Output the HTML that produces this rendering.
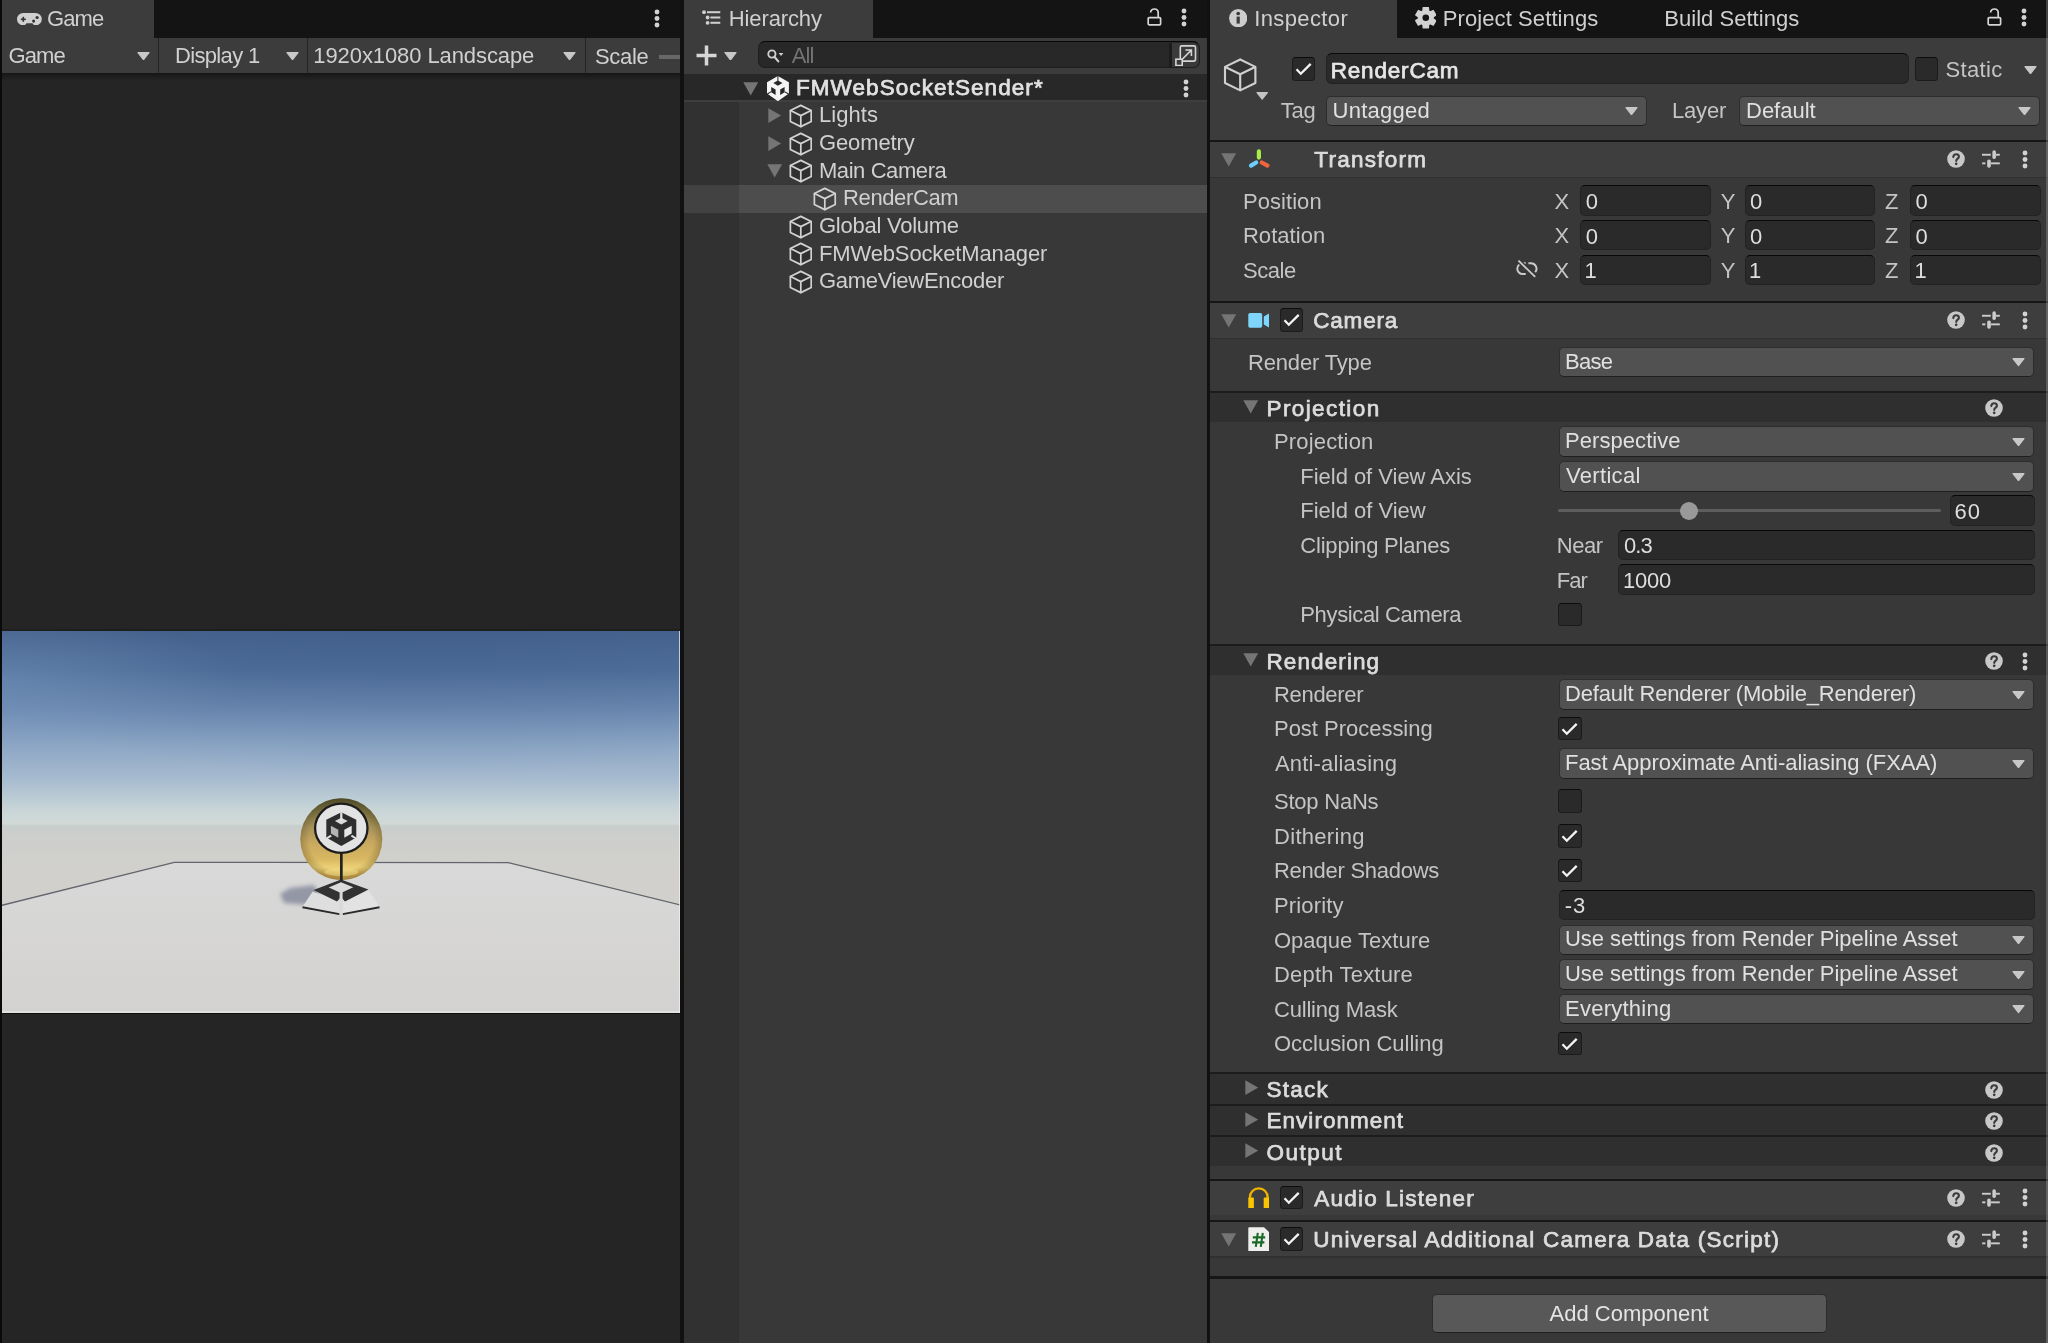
<!DOCTYPE html>
<html><head><meta charset="utf-8"><title>Unity</title>
<style>
html,body{margin:0;padding:0;background:#383838;}
body{width:2048px;height:1343px;position:relative;overflow:hidden;font-family:"Liberation Sans",sans-serif;font-size:22px;line-height:24px;}
body>div,body>svg,#t>span{position:absolute;display:block;box-sizing:border-box;}
#t{left:0;top:0;width:2048px;height:1343px;will-change:transform;background:transparent;}
#t>span{white-space:pre;}
</style></head><body>
<div style="left:0px;top:0px;width:2048px;height:1343px;background:#111;"></div>
<div style="left:2px;top:0px;width:678px;height:38px;background:#141414;"></div>
<div style="left:2px;top:0px;width:152px;height:38px;background:#3c3c3c;"></div>
<div style="left:2px;top:38px;width:678px;height:34.5px;background:#3c3c3c;"></div>
<div style="left:2px;top:72.5px;width:678px;height:1270.5px;background:#252525;"></div>
<div style="left:2px;top:72.5px;width:678px;height:8px;background:linear-gradient(#151515,#1d1d1d 40%,#252525);"></div>
<div style="left:0px;top:0px;width:2px;height:1343px;background:#0a0a0a;"></div>
<div style="left:158px;top:38px;width:1.3px;height:34.5px;background:#242424;"></div>
<div style="left:307px;top:38px;width:1.3px;height:34.5px;background:#242424;"></div>
<div style="left:585px;top:38px;width:1.3px;height:34.5px;background:#242424;"></div>
<div style="left:659.3px;top:55.2px;width:20.7px;height:3.7px;background:#686868;"></div>
<div style="left:684px;top:0px;width:523px;height:38px;background:#141414;"></div>
<div style="left:684px;top:0px;width:189px;height:38px;background:#3c3c3c;"></div>
<div style="left:684px;top:38px;width:523px;height:35.5px;background:#3c3c3c;"></div>
<div style="left:684px;top:73.5px;width:523px;height:26.8px;background:#282828;"></div>
<div style="left:684px;top:100.3px;width:523px;height:1242.7px;background:#383838;"></div>
<div style="left:684px;top:100.3px;width:55px;height:1242.7px;background:#313131;"></div>
<div style="left:684px;top:185px;width:523px;height:27.8px;background:#4d4d4d;"></div>
<div style="left:684px;top:185px;width:55px;height:27.8px;background:#424242;"></div>
<div style="left:684px;top:100.2px;width:523px;height:1.4px;background:#3e3e3e;"></div>
<div style="left:1210px;top:0px;width:838px;height:38px;background:#141414;"></div>
<div style="left:1210px;top:0px;width:187px;height:38px;background:#3c3c3c;"></div>
<div style="left:1210px;top:38px;width:838px;height:1305px;background:#383838;"></div>
<div style="left:1210px;top:38px;width:838px;height:102px;background:#3c3c3c;"></div>
<svg style="left:17px;top:12.7px;" width="24.8" height="12.5" viewBox="0 0 24.8 12.5"><path d="M6.2 0 H18.6 A6.2 6.2 0 0 1 18.6 12.4 C17 12.4 16.3 11.6 15.4 10.3 H9.5 C8.6 11.6 7.9 12.4 6.2 12.4 A6.2 6.2 0 0 1 6.2 0 Z" fill="#d0d0d0"/><g fill="#333"><rect x="3.8" y="5.5" width="5" height="1.6"/><rect x="5.5" y="3.8" width="1.6" height="5"/><circle cx="20.1" cy="4.5" r="1.6"/><circle cx="16.6" cy="8.1" r="1.55"/></g></svg>
<svg style="left:654.3px;top:8.5px;" width="6" height="19" viewBox="0 0 6 19.0"><circle cx="3" cy="3.0" r="2.45" fill="#d2d2d2"/><circle cx="3" cy="9.5" r="2.45" fill="#d2d2d2"/><circle cx="3" cy="16.0" r="2.45" fill="#d2d2d2"/></svg>
<svg style="left:137px;top:51.65px;" width="13" height="8.3" viewBox="0 0 13 8.3"><path d="M1 0.6 L12 0.6 L6.5 7.700000000000001 Z" fill="#c8c8c8" stroke="#c8c8c8" stroke-width="1.2" stroke-linejoin="round"/></svg>
<svg style="left:286.3px;top:51.65px;" width="13" height="8.3" viewBox="0 0 13 8.3"><path d="M1 0.6 L12 0.6 L6.5 7.700000000000001 Z" fill="#c8c8c8" stroke="#c8c8c8" stroke-width="1.2" stroke-linejoin="round"/></svg>
<svg style="left:563px;top:51.65px;" width="13" height="8.3" viewBox="0 0 13 8.3"><path d="M1 0.6 L12 0.6 L6.5 7.700000000000001 Z" fill="#c8c8c8" stroke="#c8c8c8" stroke-width="1.2" stroke-linejoin="round"/></svg>
<svg style="left:702px;top:10px;" width="18.5" height="15" viewBox="0 0 18.5 15"><g fill="#d0d0d0"><circle cx="2" cy="2.2" r="1.9"/><circle cx="5.6" cy="7.5" r="1.9"/><circle cx="5.6" cy="12.8" r="1.9"/><rect x="5" y="1.2" width="13.3" height="2"/><rect x="8.4" y="6.5" width="9.9" height="2"/><rect x="8.4" y="11.8" width="9.9" height="2"/></g></svg>
<svg style="left:1147.3px;top:8px;" width="15" height="18" viewBox="0 0 15 18"><g fill="none" stroke="#d6d6d6" stroke-width="1.7"><rect x="1.2" y="9.6" width="12.4" height="7.2" rx="1"/><path d="M3.6 4.6 C3.6 2.2 5.4 1 7.4 1 C9.6 1 11.2 2.4 11.2 4.8 L11.2 9.4"/></g></svg>
<svg style="left:1181.2px;top:7.9px;" width="6" height="19" viewBox="0 0 6 19.0"><circle cx="3" cy="3.0" r="2.45" fill="#d2d2d2"/><circle cx="3" cy="9.5" r="2.45" fill="#d2d2d2"/><circle cx="3" cy="16.0" r="2.45" fill="#d2d2d2"/></svg>
<svg style="left:696px;top:45.4px;" width="21" height="21" viewBox="0 0 21 21"><path d="M10.5 0.5 V20.5 M0.5 10.5 H20.5" stroke="#d6d6d6" stroke-width="3.5" fill="none"/></svg>
<svg style="left:724px;top:51.5px;" width="13" height="8.6" viewBox="0 0 13 8.6"><path d="M1 0.6 L12 0.6 L6.5 8.0 Z" fill="#c8c8c8" stroke="#c8c8c8" stroke-width="1.2" stroke-linejoin="round"/></svg>
<div style="left:758.4px;top:41.2px;width:441.6px;height:27.3px;background:#282828;border:1.5px solid #1e1e1e;border-top:1.8px solid #070707;border-radius:7px;"></div>
<div style="left:1169.4px;top:43.3px;width:2.4px;height:23.7px;background:#1c1c1c;"></div>
<div style="left:1171.8px;top:43.3px;width:26.8px;height:23.7px;background:#3a3a3a;border-radius:0 6px 6px 0;"></div>
<svg style="left:766.8px;top:48.5px;" width="17" height="14" viewBox="0 0 17 14"><circle cx="4.9" cy="5" r="3.6" fill="none" stroke="#cfcfcf" stroke-width="1.9"/><path d="M7.4 7.8 L11.3 12.4" stroke="#cfcfcf" stroke-width="2.2" stroke-linecap="round"/><path d="M11.6 4 L16.4 4 L14 7 Z" fill="#cfcfcf"/></svg>
<svg style="left:1175px;top:44.5px;" width="21.5" height="21.5" viewBox="0 0 21.5 21.5"><g fill="none" stroke="#d4d4d4" stroke-width="1.6"><rect x="5.3" y="0.9" width="15.2" height="15.2" rx="1.5"/><rect x="0.9" y="14.2" width="6.3" height="6.3" fill="#3a3a3a"/><path d="M7.5 14 L16 5.4 M10.4 5 H16.4 V11" /></g></svg>
<svg style="left:742.6px;top:81.9px;" width="15.4" height="13.8" viewBox="0 0 15.4 13.8"><path d="M0.3 0.3 L15.1 0.3 L7.7 13.5 Z" fill="#757575"/></svg>
<svg style="left:766.5px;top:75.6px;" width="22" height="25.2" viewBox="0 0 22 25.2"><path d="M10.9 0 L21.9 6.3 V17.6 L10.9 25.2 L0 17.6 V6.3 Z" fill="#f4f4f4"/><g fill="#262626"><path d="M6.3 7.1 L10.9 4.6 L15.5 7.1 L10.9 9.7Z"/><path d="M4.2 10.9 L8.6 13.4 V18.9 L4.2 16.3Z"/><path d="M17.6 10.9 L13.2 13.4 V18.9 L17.6 16.3Z"/><rect x="10.4" y="0" width="1" height="5"/><path d="M0 17.6 L4 15.2 L4.5 16.1 L0.6 18.4Z"/><path d="M21.9 17.6 L17.8 15.2 L17.3 16.1 L21.3 18.4Z"/></g></svg>
<svg style="left:1182.8px;top:79.1px;" width="6" height="19" viewBox="0 0 6 19.0"><circle cx="3" cy="3.0" r="2.45" fill="#d2d2d2"/><circle cx="3" cy="9.5" r="2.45" fill="#d2d2d2"/><circle cx="3" cy="16.0" r="2.45" fill="#d2d2d2"/></svg>
<svg style="left:768.4px;top:108.3px;" width="13.4" height="15.2" viewBox="0 0 13.4 15.2"><path d="M0.3 0.3 L13.1 7.6 L0.3 14.899999999999999 Z" fill="#757575"/></svg>
<svg style="left:788.7px;top:103.9px;" width="23.6" height="24" viewBox="0 0 24 24"><g fill="none" stroke="#d2d2d2" stroke-width="1.75" stroke-linejoin="round" stroke-linecap="round"><path d="M12 1.2 L22.6 6.4 L22.6 17.6 L12 22.8 L1.4 17.6 L1.4 6.4 Z" fill="rgba(0,0,0,0.13)"/><path d="M1.6 6.5 L12 11.6 L22.4 6.5 M12 11.6 L12 22.6"/></g></svg>
<svg style="left:768.4px;top:135.9px;" width="13.4" height="15.2" viewBox="0 0 13.4 15.2"><path d="M0.3 0.3 L13.1 7.6 L0.3 14.899999999999999 Z" fill="#757575"/></svg>
<svg style="left:788.7px;top:131.5px;" width="23.6" height="24" viewBox="0 0 24 24"><g fill="none" stroke="#d2d2d2" stroke-width="1.75" stroke-linejoin="round" stroke-linecap="round"><path d="M12 1.2 L22.6 6.4 L22.6 17.6 L12 22.8 L1.4 17.6 L1.4 6.4 Z" fill="rgba(0,0,0,0.13)"/><path d="M1.6 6.5 L12 11.6 L22.4 6.5 M12 11.6 L12 22.6"/></g></svg>
<svg style="left:767.2px;top:164.3px;" width="15.4" height="13.8" viewBox="0 0 15.4 13.8"><path d="M0.3 0.3 L15.1 0.3 L7.7 13.5 Z" fill="#757575"/></svg>
<svg style="left:788.7px;top:159.2px;" width="23.6" height="24" viewBox="0 0 24 24"><g fill="none" stroke="#d2d2d2" stroke-width="1.75" stroke-linejoin="round" stroke-linecap="round"><path d="M12 1.2 L22.6 6.4 L22.6 17.6 L12 22.8 L1.4 17.6 L1.4 6.4 Z" fill="rgba(0,0,0,0.13)"/><path d="M1.6 6.5 L12 11.6 L22.4 6.5 M12 11.6 L12 22.6"/></g></svg>
<svg style="left:788.7px;top:214.5px;" width="23.6" height="24" viewBox="0 0 24 24"><g fill="none" stroke="#d2d2d2" stroke-width="1.75" stroke-linejoin="round" stroke-linecap="round"><path d="M12 1.2 L22.6 6.4 L22.6 17.6 L12 22.8 L1.4 17.6 L1.4 6.4 Z" fill="rgba(0,0,0,0.13)"/><path d="M1.6 6.5 L12 11.6 L22.4 6.5 M12 11.6 L12 22.6"/></g></svg>
<svg style="left:788.7px;top:242.2px;" width="23.6" height="24" viewBox="0 0 24 24"><g fill="none" stroke="#d2d2d2" stroke-width="1.75" stroke-linejoin="round" stroke-linecap="round"><path d="M12 1.2 L22.6 6.4 L22.6 17.6 L12 22.8 L1.4 17.6 L1.4 6.4 Z" fill="rgba(0,0,0,0.13)"/><path d="M1.6 6.5 L12 11.6 L22.4 6.5 M12 11.6 L12 22.6"/></g></svg>
<svg style="left:788.7px;top:269.9px;" width="23.6" height="24" viewBox="0 0 24 24"><g fill="none" stroke="#d2d2d2" stroke-width="1.75" stroke-linejoin="round" stroke-linecap="round"><path d="M12 1.2 L22.6 6.4 L22.6 17.6 L12 22.8 L1.4 17.6 L1.4 6.4 Z" fill="rgba(0,0,0,0.13)"/><path d="M1.6 6.5 L12 11.6 L22.4 6.5 M12 11.6 L12 22.6"/></g></svg>
<svg style="left:813.3px;top:186.8px;" width="23.6" height="24" viewBox="0 0 24 24"><g fill="none" stroke="#d2d2d2" stroke-width="1.75" stroke-linejoin="round" stroke-linecap="round"><path d="M12 1.2 L22.6 6.4 L22.6 17.6 L12 22.8 L1.4 17.6 L1.4 6.4 Z" fill="rgba(0,0,0,0.13)"/><path d="M1.6 6.5 L12 11.6 L22.4 6.5 M12 11.6 L12 22.6"/></g></svg>
<svg style="left:1228.7px;top:8.6px;" width="18.4" height="18.4" viewBox="0 0 18.4 18.4"><circle cx="9.2" cy="9.2" r="9.1" fill="#cdcdcd"/><rect x="7.6" y="7.6" width="3.2" height="7" fill="#3c3c3c"/><circle cx="9.2" cy="4.5" r="1.85" fill="#3c3c3c"/></svg>
<svg style="left:1414.9px;top:7.4px;" width="21.6" height="21.6" viewBox="0 0 21.6 21.6"><path d="M13.72 17.60 L13.45 20.96 L8.15 20.96 L7.88 17.60 L6.37 16.73 L3.33 18.17 L0.68 13.59 L3.45 11.68 L3.45 9.92 L0.68 8.01 L3.33 3.43 L6.37 4.87 L7.88 4.00 L8.15 0.64 L13.45 0.64 L13.72 4.00 L15.23 4.87 L18.27 3.43 L20.92 8.01 L18.15 9.92 L18.15 11.68 L20.92 13.59 L18.27 18.17 L15.23 16.73Z" fill="#d2d2d2" stroke="#d2d2d2" stroke-width="1.2" stroke-linejoin="round"/><circle cx="10.8" cy="10.8" r="7.6" fill="#d2d2d2"/><circle cx="10.8" cy="10.8" r="3.3" fill="#141414"/></svg>
<svg style="left:1986.6px;top:8.4px;" width="15" height="18" viewBox="0 0 15 18"><g fill="none" stroke="#d6d6d6" stroke-width="1.7"><rect x="1.2" y="9.6" width="12.4" height="7.2" rx="1"/><path d="M3.6 4.6 C3.6 2.2 5.4 1 7.4 1 C9.6 1 11.2 2.4 11.2 4.8 L11.2 9.4"/></g></svg>
<svg style="left:2020.8px;top:7.9px;" width="6" height="19" viewBox="0 0 6 19.0"><circle cx="3" cy="3.0" r="2.45" fill="#d2d2d2"/><circle cx="3" cy="9.5" r="2.45" fill="#d2d2d2"/><circle cx="3" cy="16.0" r="2.45" fill="#d2d2d2"/></svg>
<svg style="left:1222.8px;top:57px;" width="34.4" height="35.8" viewBox="0 0 24 24"><g fill="none" stroke="#cfcfcf" stroke-width="1.5" stroke-linejoin="round" stroke-linecap="round"><path d="M12 1.2 L22.6 6.4 L22.6 17.6 L12 22.8 L1.4 17.6 L1.4 6.4 Z" fill="rgba(0,0,0,0.13)"/><path d="M1.6 6.5 L12 11.6 L22.4 6.5 M12 11.6 L12 22.6"/></g></svg>
<svg style="left:1255.6px;top:91.9px;" width="12.4" height="7.8" viewBox="0 0 12.4 7.8"><path d="M1 0.6 L11.4 0.6 L6.2 7.2 Z" fill="#c4c4c4" stroke="#c4c4c4" stroke-width="1.2" stroke-linejoin="round"/></svg>
<div style="left:1291.7px;top:57.3px;width:23.6px;height:23.6px;background:#2a2a2a;border:1.4px solid #1b1b1b;border-top-color:#0c0c0c;border-radius:3.5px;"></div>
<svg style="left:1291.7px;top:57.3px;" width="23.6" height="23.6" viewBox="0 0 23.6 23.6"><path d="M4.5 12.3 L8.8 16.7 L18.7 6.9" fill="none" stroke="#f4f4f4" stroke-width="2.3" stroke-linecap="butt" stroke-linejoin="miter"/></svg>
<div style="left:1325.6px;top:52.9px;width:583.3px;height:31.6px;background:#2a2a2a;border:1.3px solid #222;border-top:1.4px solid #080808;border-radius:6px;"></div>
<div style="left:1914.7px;top:57.3px;width:23.6px;height:23.6px;background:#2a2a2a;border:1.4px solid #1b1b1b;border-top-color:#0c0c0c;border-radius:3.5px;"></div>
<svg style="left:2024.4px;top:65.65px;" width="13" height="8.3" viewBox="0 0 13 8.3"><path d="M1 0.6 L12 0.6 L6.5 7.700000000000001 Z" fill="#c8c8c8" stroke="#c8c8c8" stroke-width="1.2" stroke-linejoin="round"/></svg>
<div style="left:1325.6px;top:95.6px;width:321.9px;height:30.6px;background:#515151;border:1.2px solid #2d2d2d;border-bottom:1.5px solid #1f1f1f;border-radius:5px;"></div>
<svg style="left:1624.8px;top:107.15px;" width="13" height="8.3" viewBox="0 0 13 8.3"><path d="M1 0.6 L12 0.6 L6.5 7.700000000000001 Z" fill="#c8c8c8" stroke="#c8c8c8" stroke-width="1.2" stroke-linejoin="round"/></svg>
<div style="left:1739.1px;top:95.6px;width:301.4px;height:30.6px;background:#515151;border:1.2px solid #2d2d2d;border-bottom:1.5px solid #1f1f1f;border-radius:5px;"></div>
<svg style="left:2017.8px;top:107.15px;" width="13" height="8.3" viewBox="0 0 13 8.3"><path d="M1 0.6 L12 0.6 L6.5 7.700000000000001 Z" fill="#c8c8c8" stroke="#c8c8c8" stroke-width="1.2" stroke-linejoin="round"/></svg>
<div style="left:1210px;top:140px;width:838px;height:2px;background:#161616;"></div>
<div style="left:1210px;top:142px;width:838px;height:34.6px;background:#3e3e3e;"></div>
<div style="left:1210px;top:176.6px;width:838px;height:1.2px;background:#303030;"></div>
<svg style="left:1220.7px;top:153.2px;" width="15.4" height="13.8" viewBox="0 0 15.4 13.8"><path d="M0.3 0.3 L15.1 0.3 L7.7 13.5 Z" fill="#757575"/></svg>
<svg style="left:1947px;top:150.3px;" width="18" height="18" viewBox="0 0 18 18"><circle cx="9" cy="9" r="8.8" fill="#c8c8c8"/><path d="M6.3 7.1 C6.3 5.3 7.5 4.3 9.1 4.3 C10.8 4.3 11.9 5.3 11.9 6.7 C11.9 8.6 9.3 8.7 9.2 10.9" fill="none" stroke="#3a3a3a" stroke-width="2.1" stroke-linecap="round"/><circle cx="9.2" cy="13.8" r="1.35" fill="#3a3a3a"/></svg>
<svg style="left:1981.9px;top:150.3px;" width="17.8" height="18" viewBox="0 0 17.8 18"><g fill="#cccccc"><rect x="0" y="3.8" width="8.8" height="1.9"/><rect x="13.8" y="3.8" width="4" height="1.9"/><rect x="10.4" y="0.3" width="3.5" height="8.6" rx="1.7"/><rect x="0.2" y="12.4" width="3.2" height="1.9"/><rect x="8.8" y="12.4" width="9" height="1.9"/><rect x="5.2" y="9.4" width="3.6" height="8.4" rx="1.7"/></g></svg>
<svg style="left:2022.4px;top:149.8px;" width="6" height="19" viewBox="0 0 6 19.0"><circle cx="3" cy="3.0" r="2.45" fill="#d2d2d2"/><circle cx="3" cy="9.5" r="2.45" fill="#d2d2d2"/><circle cx="3" cy="16.0" r="2.45" fill="#d2d2d2"/></svg>
<svg style="left:1247.6px;top:149px;" width="22.6" height="20.6" viewBox="0 0 22.6 20.6"><g stroke-linecap="round" stroke-width="4.2" fill="none"><path d="M10.9 2.4 V8.6" stroke="#a8ec48"/><path d="M8.2 13.5 L3 16.6" stroke="#6ccfff"/><path d="M13.8 13.5 L19.4 16.6" stroke="#f0653a"/></g></svg>
<div style="left:1580.2px;top:185.1px;width:130.4px;height:30.5px;background:#2a2a2a;border:1.3px solid #222;border-top:1.4px solid #080808;border-radius:5px;"></div>
<div style="left:1744.5px;top:185.1px;width:130.6px;height:30.5px;background:#2a2a2a;border:1.3px solid #222;border-top:1.4px solid #080808;border-radius:5px;"></div>
<div style="left:1910px;top:185.1px;width:130.6px;height:30.5px;background:#2a2a2a;border:1.3px solid #222;border-top:1.4px solid #080808;border-radius:5px;"></div>
<div style="left:1580.2px;top:219.8px;width:130.4px;height:30.5px;background:#2a2a2a;border:1.3px solid #222;border-top:1.4px solid #080808;border-radius:5px;"></div>
<div style="left:1744.5px;top:219.8px;width:130.6px;height:30.5px;background:#2a2a2a;border:1.3px solid #222;border-top:1.4px solid #080808;border-radius:5px;"></div>
<div style="left:1910px;top:219.8px;width:130.6px;height:30.5px;background:#2a2a2a;border:1.3px solid #222;border-top:1.4px solid #080808;border-radius:5px;"></div>
<div style="left:1580.2px;top:254.5px;width:130.4px;height:30.5px;background:#2a2a2a;border:1.3px solid #222;border-top:1.4px solid #080808;border-radius:5px;"></div>
<div style="left:1744.5px;top:254.5px;width:130.6px;height:30.5px;background:#2a2a2a;border:1.3px solid #222;border-top:1.4px solid #080808;border-radius:5px;"></div>
<div style="left:1910px;top:254.5px;width:130.6px;height:30.5px;background:#2a2a2a;border:1.3px solid #222;border-top:1.4px solid #080808;border-radius:5px;"></div>
<svg style="left:1516.1px;top:260.4px;" width="21.6" height="17.6" viewBox="0 0 21.6 17.6"><g fill="none" stroke="#cacaca" stroke-width="2" stroke-linecap="butt"><path d="M9.7 3.3 H6.7 A5.4 5.4 0 0 0 6.7 14.1 H9.7"/><path d="M12.4 3.3 H15 A5.4 5.4 0 0 1 19.2 12.2"/><path d="M7.8 8.7 H10.2" stroke-width="1.6"/></g><path d="M2.4 0.6 L19.2 16.9" stroke="#383838" stroke-width="4.6"/><path d="M2.4 0.6 L19.2 16.9" stroke="#cacaca" stroke-width="1.9"/></svg>
<div style="left:1210px;top:300.8px;width:838px;height:2px;background:#161616;"></div>
<div style="left:1210px;top:302.8px;width:838px;height:35px;background:#3e3e3e;"></div>
<div style="left:1210px;top:337.8px;width:838px;height:1.2px;background:#303030;"></div>
<svg style="left:1220.7px;top:314.2px;" width="15.4" height="13.8" viewBox="0 0 15.4 13.8"><path d="M0.3 0.3 L15.1 0.3 L7.7 13.5 Z" fill="#757575"/></svg>
<div style="left:1279.5px;top:308.2px;width:23.6px;height:23.6px;background:#2a2a2a;border:1.4px solid #1b1b1b;border-top-color:#0c0c0c;border-radius:3.5px;"></div>
<svg style="left:1279.5px;top:308.2px;" width="23.6" height="23.6" viewBox="0 0 23.6 23.6"><path d="M4.5 12.3 L8.8 16.7 L18.7 6.9" fill="none" stroke="#f4f4f4" stroke-width="2.3" stroke-linecap="butt" stroke-linejoin="miter"/></svg>
<svg style="left:1947px;top:311.3px;" width="18" height="18" viewBox="0 0 18 18"><circle cx="9" cy="9" r="8.8" fill="#c8c8c8"/><path d="M6.3 7.1 C6.3 5.3 7.5 4.3 9.1 4.3 C10.8 4.3 11.9 5.3 11.9 6.7 C11.9 8.6 9.3 8.7 9.2 10.9" fill="none" stroke="#3a3a3a" stroke-width="2.1" stroke-linecap="round"/><circle cx="9.2" cy="13.8" r="1.35" fill="#3a3a3a"/></svg>
<svg style="left:1981.9px;top:311.3px;" width="17.8" height="18" viewBox="0 0 17.8 18"><g fill="#cccccc"><rect x="0" y="3.8" width="8.8" height="1.9"/><rect x="13.8" y="3.8" width="4" height="1.9"/><rect x="10.4" y="0.3" width="3.5" height="8.6" rx="1.7"/><rect x="0.2" y="12.4" width="3.2" height="1.9"/><rect x="8.8" y="12.4" width="9" height="1.9"/><rect x="5.2" y="9.4" width="3.6" height="8.4" rx="1.7"/></g></svg>
<svg style="left:2022.4px;top:310.8px;" width="6" height="19" viewBox="0 0 6 19.0"><circle cx="3" cy="3.0" r="2.45" fill="#d2d2d2"/><circle cx="3" cy="9.5" r="2.45" fill="#d2d2d2"/><circle cx="3" cy="16.0" r="2.45" fill="#d2d2d2"/></svg>
<svg style="left:1247.8px;top:312.5px;" width="21.6" height="15" viewBox="0 0 21.6 15"><rect x="0.3" y="0.1" width="13.9" height="14.7" rx="1.7" fill="#7fd6fd"/><path d="M15.8 3.4 L21.2 0.3 V14.7 L15.8 11.6 Z" fill="#7fd6fd"/></svg>
<div style="left:1558.8px;top:346.8px;width:475.7px;height:30.4px;background:#515151;border:1.2px solid #2d2d2d;border-bottom:1.5px solid #1f1f1f;border-radius:5px;"></div>
<svg style="left:2011.8px;top:358.25px;" width="13" height="8.3" viewBox="0 0 13 8.3"><path d="M1 0.6 L12 0.6 L6.5 7.700000000000001 Z" fill="#c8c8c8" stroke="#c8c8c8" stroke-width="1.2" stroke-linejoin="round"/></svg>
<div style="left:1210px;top:391px;width:838px;height:2px;background:#1c1c1c;"></div>
<div style="left:1210px;top:393px;width:838px;height:29.2px;background:#2f2f2f;"></div>
<svg style="left:1242.9px;top:399.9px;" width="15.4" height="13.8" viewBox="0 0 15.4 13.8"><path d="M0.3 0.3 L15.1 0.3 L7.7 13.5 Z" fill="#757575"/></svg>
<svg style="left:1985.4px;top:399.4px;" width="18" height="18" viewBox="0 0 18 18"><circle cx="9" cy="9" r="8.8" fill="#c8c8c8"/><path d="M6.3 7.1 C6.3 5.3 7.5 4.3 9.1 4.3 C10.8 4.3 11.9 5.3 11.9 6.7 C11.9 8.6 9.3 8.7 9.2 10.9" fill="none" stroke="#3a3a3a" stroke-width="2.1" stroke-linecap="round"/><circle cx="9.2" cy="13.8" r="1.35" fill="#3a3a3a"/></svg>
<div style="left:1558.8px;top:426.3px;width:475.7px;height:30.4px;background:#515151;border:1.2px solid #2d2d2d;border-bottom:1.5px solid #1f1f1f;border-radius:5px;"></div>
<svg style="left:2011.8px;top:437.75px;" width="13" height="8.3" viewBox="0 0 13 8.3"><path d="M1 0.6 L12 0.6 L6.5 7.700000000000001 Z" fill="#c8c8c8" stroke="#c8c8c8" stroke-width="1.2" stroke-linejoin="round"/></svg>
<div style="left:1558.8px;top:461px;width:475.7px;height:30.5px;background:#515151;border:1.2px solid #2d2d2d;border-bottom:1.5px solid #1f1f1f;border-radius:5px;"></div>
<svg style="left:2011.8px;top:472.5px;" width="13" height="8.3" viewBox="0 0 13 8.3"><path d="M1 0.6 L12 0.6 L6.5 7.700000000000001 Z" fill="#c8c8c8" stroke="#c8c8c8" stroke-width="1.2" stroke-linejoin="round"/></svg>
<div style="left:1558px;top:509.2px;width:383px;height:3px;background:#5e5e5e;border-radius:1.5px;"></div>
<div style="left:1679.8px;top:501.7px;width:18px;height:18px;background:#999;border-radius:50%;"></div>
<div style="left:1949.7px;top:495px;width:85.6px;height:30.9px;background:#2a2a2a;border:1.3px solid #222;border-top:1.4px solid #080808;border-radius:5px;"></div>
<div style="left:1618.2px;top:529.6px;width:417.1px;height:30.8px;background:#2a2a2a;border:1.3px solid #222;border-top:1.4px solid #080808;border-radius:5px;"></div>
<div style="left:1618.2px;top:564.2px;width:417.1px;height:30.8px;background:#2a2a2a;border:1.3px solid #222;border-top:1.4px solid #080808;border-radius:5px;"></div>
<div style="left:1558.3px;top:602.5px;width:23.6px;height:23.6px;background:#2a2a2a;border:1.4px solid #1b1b1b;border-top-color:#0c0c0c;border-radius:3.5px;"></div>
<div style="left:1210px;top:643.6px;width:838px;height:2px;background:#1c1c1c;"></div>
<div style="left:1210px;top:645.6px;width:838px;height:29.2px;background:#2f2f2f;"></div>
<svg style="left:1242.9px;top:652.5px;" width="15.4" height="13.8" viewBox="0 0 15.4 13.8"><path d="M0.3 0.3 L15.1 0.3 L7.7 13.5 Z" fill="#757575"/></svg>
<svg style="left:1985.4px;top:652px;" width="18" height="18" viewBox="0 0 18 18"><circle cx="9" cy="9" r="8.8" fill="#c8c8c8"/><path d="M6.3 7.1 C6.3 5.3 7.5 4.3 9.1 4.3 C10.8 4.3 11.9 5.3 11.9 6.7 C11.9 8.6 9.3 8.7 9.2 10.9" fill="none" stroke="#3a3a3a" stroke-width="2.1" stroke-linecap="round"/><circle cx="9.2" cy="13.8" r="1.35" fill="#3a3a3a"/></svg>
<svg style="left:2022.4px;top:651.5px;" width="6" height="19" viewBox="0 0 6 19.0"><circle cx="3" cy="3.0" r="2.45" fill="#d2d2d2"/><circle cx="3" cy="9.5" r="2.45" fill="#d2d2d2"/><circle cx="3" cy="16.0" r="2.45" fill="#d2d2d2"/></svg>
<div style="left:1558.8px;top:679.3px;width:475.7px;height:30.4px;background:#515151;border:1.2px solid #2d2d2d;border-bottom:1.5px solid #1f1f1f;border-radius:5px;"></div>
<svg style="left:2011.8px;top:690.75px;" width="13" height="8.3" viewBox="0 0 13 8.3"><path d="M1 0.6 L12 0.6 L6.5 7.700000000000001 Z" fill="#c8c8c8" stroke="#c8c8c8" stroke-width="1.2" stroke-linejoin="round"/></svg>
<div style="left:1558.3px;top:716.8px;width:23.6px;height:23.6px;background:#2a2a2a;border:1.4px solid #1b1b1b;border-top-color:#0c0c0c;border-radius:3.5px;"></div>
<svg style="left:1558.3px;top:716.8px;" width="23.6" height="23.6" viewBox="0 0 23.6 23.6"><path d="M4.5 12.3 L8.8 16.7 L18.7 6.9" fill="none" stroke="#f4f4f4" stroke-width="2.3" stroke-linecap="butt" stroke-linejoin="miter"/></svg>
<div style="left:1558.8px;top:748px;width:475.7px;height:30.5px;background:#515151;border:1.2px solid #2d2d2d;border-bottom:1.5px solid #1f1f1f;border-radius:5px;"></div>
<svg style="left:2011.8px;top:759.5px;" width="13" height="8.3" viewBox="0 0 13 8.3"><path d="M1 0.6 L12 0.6 L6.5 7.700000000000001 Z" fill="#c8c8c8" stroke="#c8c8c8" stroke-width="1.2" stroke-linejoin="round"/></svg>
<div style="left:1558.3px;top:789.2px;width:23.6px;height:23.6px;background:#2a2a2a;border:1.4px solid #1b1b1b;border-top-color:#0c0c0c;border-radius:3.5px;"></div>
<div style="left:1558.3px;top:824.2px;width:23.6px;height:23.6px;background:#2a2a2a;border:1.4px solid #1b1b1b;border-top-color:#0c0c0c;border-radius:3.5px;"></div>
<svg style="left:1558.3px;top:824.2px;" width="23.6" height="23.6" viewBox="0 0 23.6 23.6"><path d="M4.5 12.3 L8.8 16.7 L18.7 6.9" fill="none" stroke="#f4f4f4" stroke-width="2.3" stroke-linecap="butt" stroke-linejoin="miter"/></svg>
<div style="left:1558.3px;top:858.7px;width:23.6px;height:23.6px;background:#2a2a2a;border:1.4px solid #1b1b1b;border-top-color:#0c0c0c;border-radius:3.5px;"></div>
<svg style="left:1558.3px;top:858.7px;" width="23.6" height="23.6" viewBox="0 0 23.6 23.6"><path d="M4.5 12.3 L8.8 16.7 L18.7 6.9" fill="none" stroke="#f4f4f4" stroke-width="2.3" stroke-linecap="butt" stroke-linejoin="miter"/></svg>
<div style="left:1558.8px;top:889.6px;width:476.5px;height:30.8px;background:#2a2a2a;border:1.3px solid #222;border-top:1.4px solid #080808;border-radius:5px;"></div>
<div style="left:1558.8px;top:924.7px;width:475.7px;height:30.5px;background:#515151;border:1.2px solid #2d2d2d;border-bottom:1.5px solid #1f1f1f;border-radius:5px;"></div>
<svg style="left:2011.8px;top:936.2px;" width="13" height="8.3" viewBox="0 0 13 8.3"><path d="M1 0.6 L12 0.6 L6.5 7.700000000000001 Z" fill="#c8c8c8" stroke="#c8c8c8" stroke-width="1.2" stroke-linejoin="round"/></svg>
<div style="left:1558.8px;top:959.1px;width:475.7px;height:30.7px;background:#515151;border:1.2px solid #2d2d2d;border-bottom:1.5px solid #1f1f1f;border-radius:5px;"></div>
<svg style="left:2011.8px;top:970.7px;" width="13" height="8.3" viewBox="0 0 13 8.3"><path d="M1 0.6 L12 0.6 L6.5 7.700000000000001 Z" fill="#c8c8c8" stroke="#c8c8c8" stroke-width="1.2" stroke-linejoin="round"/></svg>
<div style="left:1558.8px;top:993.8px;width:475.7px;height:30.5px;background:#515151;border:1.2px solid #2d2d2d;border-bottom:1.5px solid #1f1f1f;border-radius:5px;"></div>
<svg style="left:2011.8px;top:1005.3px;" width="13" height="8.3" viewBox="0 0 13 8.3"><path d="M1 0.6 L12 0.6 L6.5 7.700000000000001 Z" fill="#c8c8c8" stroke="#c8c8c8" stroke-width="1.2" stroke-linejoin="round"/></svg>
<div style="left:1558.3px;top:1031.9px;width:23.6px;height:23.6px;background:#2a2a2a;border:1.4px solid #1b1b1b;border-top-color:#0c0c0c;border-radius:3.5px;"></div>
<svg style="left:1558.3px;top:1031.9px;" width="23.6" height="23.6" viewBox="0 0 23.6 23.6"><path d="M4.5 12.3 L8.8 16.7 L18.7 6.9" fill="none" stroke="#f4f4f4" stroke-width="2.3" stroke-linecap="butt" stroke-linejoin="miter"/></svg>
<div style="left:1210px;top:1072px;width:838px;height:2px;background:#1c1c1c;"></div>
<div style="left:1210px;top:1074px;width:838px;height:30px;background:#2f2f2f;"></div>
<svg style="left:1244.5px;top:1080.4px;" width="13.4" height="15.2" viewBox="0 0 13.4 15.2"><path d="M0.3 0.3 L13.1 7.6 L0.3 14.899999999999999 Z" fill="#757575"/></svg>
<svg style="left:1985.4px;top:1080.8px;" width="18" height="18" viewBox="0 0 18 18"><circle cx="9" cy="9" r="8.8" fill="#c8c8c8"/><path d="M6.3 7.1 C6.3 5.3 7.5 4.3 9.1 4.3 C10.8 4.3 11.9 5.3 11.9 6.7 C11.9 8.6 9.3 8.7 9.2 10.9" fill="none" stroke="#3a3a3a" stroke-width="2.1" stroke-linecap="round"/><circle cx="9.2" cy="13.8" r="1.35" fill="#3a3a3a"/></svg>
<div style="left:1210px;top:1104px;width:838px;height:2px;background:#1c1c1c;"></div>
<div style="left:1210px;top:1106px;width:838px;height:29.3px;background:#2f2f2f;"></div>
<svg style="left:1244.5px;top:1112.05px;" width="13.4" height="15.2" viewBox="0 0 13.4 15.2"><path d="M0.3 0.3 L13.1 7.6 L0.3 14.899999999999999 Z" fill="#757575"/></svg>
<svg style="left:1985.4px;top:1112.45px;" width="18" height="18" viewBox="0 0 18 18"><circle cx="9" cy="9" r="8.8" fill="#c8c8c8"/><path d="M6.3 7.1 C6.3 5.3 7.5 4.3 9.1 4.3 C10.8 4.3 11.9 5.3 11.9 6.7 C11.9 8.6 9.3 8.7 9.2 10.9" fill="none" stroke="#3a3a3a" stroke-width="2.1" stroke-linecap="round"/><circle cx="9.2" cy="13.8" r="1.35" fill="#3a3a3a"/></svg>
<div style="left:1210px;top:1135.3px;width:838px;height:2px;background:#1c1c1c;"></div>
<div style="left:1210px;top:1137.3px;width:838px;height:29.1px;background:#2f2f2f;"></div>
<svg style="left:1244.5px;top:1143.25px;" width="13.4" height="15.2" viewBox="0 0 13.4 15.2"><path d="M0.3 0.3 L13.1 7.6 L0.3 14.899999999999999 Z" fill="#757575"/></svg>
<svg style="left:1985.4px;top:1143.65px;" width="18" height="18" viewBox="0 0 18 18"><circle cx="9" cy="9" r="8.8" fill="#c8c8c8"/><path d="M6.3 7.1 C6.3 5.3 7.5 4.3 9.1 4.3 C10.8 4.3 11.9 5.3 11.9 6.7 C11.9 8.6 9.3 8.7 9.2 10.9" fill="none" stroke="#3a3a3a" stroke-width="2.1" stroke-linecap="round"/><circle cx="9.2" cy="13.8" r="1.35" fill="#3a3a3a"/></svg>
<div style="left:1210px;top:1178.8px;width:838px;height:2px;background:#161616;"></div>
<div style="left:1210px;top:1180.8px;width:838px;height:33.8px;background:#3e3e3e;"></div>
<div style="left:1210px;top:1214.6px;width:838px;height:1.2px;background:#303030;"></div>
<div style="left:1279.5px;top:1185.6px;width:23.6px;height:23.6px;background:#2a2a2a;border:1.4px solid #1b1b1b;border-top-color:#0c0c0c;border-radius:3.5px;"></div>
<svg style="left:1279.5px;top:1185.6px;" width="23.6" height="23.6" viewBox="0 0 23.6 23.6"><path d="M4.5 12.3 L8.8 16.7 L18.7 6.9" fill="none" stroke="#f4f4f4" stroke-width="2.3" stroke-linecap="butt" stroke-linejoin="miter"/></svg>
<svg style="left:1947px;top:1188.7px;" width="18" height="18" viewBox="0 0 18 18"><circle cx="9" cy="9" r="8.8" fill="#c8c8c8"/><path d="M6.3 7.1 C6.3 5.3 7.5 4.3 9.1 4.3 C10.8 4.3 11.9 5.3 11.9 6.7 C11.9 8.6 9.3 8.7 9.2 10.9" fill="none" stroke="#3a3a3a" stroke-width="2.1" stroke-linecap="round"/><circle cx="9.2" cy="13.8" r="1.35" fill="#3a3a3a"/></svg>
<svg style="left:1981.9px;top:1188.7px;" width="17.8" height="18" viewBox="0 0 17.8 18"><g fill="#cccccc"><rect x="0" y="3.8" width="8.8" height="1.9"/><rect x="13.8" y="3.8" width="4" height="1.9"/><rect x="10.4" y="0.3" width="3.5" height="8.6" rx="1.7"/><rect x="0.2" y="12.4" width="3.2" height="1.9"/><rect x="8.8" y="12.4" width="9" height="1.9"/><rect x="5.2" y="9.4" width="3.6" height="8.4" rx="1.7"/></g></svg>
<svg style="left:2022.4px;top:1188.2px;" width="6" height="19" viewBox="0 0 6 19.0"><circle cx="3" cy="3.0" r="2.45" fill="#d2d2d2"/><circle cx="3" cy="9.5" r="2.45" fill="#d2d2d2"/><circle cx="3" cy="16.0" r="2.45" fill="#d2d2d2"/></svg>
<svg style="left:1247.8px;top:1186.6px;" width="21.6" height="21.6" viewBox="0 0 21.6 21.6"><path d="M1.9 12 V10.4 C1.9 5.2 5.8 1.4 10.8 1.4 C15.8 1.4 19.7 5.2 19.7 10.4 V12" fill="none" stroke="#f2b200" stroke-width="2.3"/><rect x="0.3" y="10.6" width="5.6" height="10.8" rx="0.8" fill="#f9c400"/><rect x="15.7" y="10.6" width="5.6" height="10.8" rx="0.8" fill="#f9c400"/></svg>
<div style="left:1210px;top:1214.6px;width:838px;height:5.2px;background:#383838;"></div>
<div style="left:1210px;top:1220.2px;width:838px;height:2px;background:#161616;"></div>
<div style="left:1210px;top:1222.2px;width:838px;height:34.2px;background:#3e3e3e;"></div>
<div style="left:1210px;top:1256.4px;width:838px;height:1.2px;background:#303030;"></div>
<svg style="left:1220.7px;top:1233.2px;" width="15.4" height="13.8" viewBox="0 0 15.4 13.8"><path d="M0.3 0.3 L15.1 0.3 L7.7 13.5 Z" fill="#757575"/></svg>
<div style="left:1279.5px;top:1227.2px;width:23.6px;height:23.6px;background:#2a2a2a;border:1.4px solid #1b1b1b;border-top-color:#0c0c0c;border-radius:3.5px;"></div>
<svg style="left:1279.5px;top:1227.2px;" width="23.6" height="23.6" viewBox="0 0 23.6 23.6"><path d="M4.5 12.3 L8.8 16.7 L18.7 6.9" fill="none" stroke="#f4f4f4" stroke-width="2.3" stroke-linecap="butt" stroke-linejoin="miter"/></svg>
<svg style="left:1947px;top:1230.3px;" width="18" height="18" viewBox="0 0 18 18"><circle cx="9" cy="9" r="8.8" fill="#c8c8c8"/><path d="M6.3 7.1 C6.3 5.3 7.5 4.3 9.1 4.3 C10.8 4.3 11.9 5.3 11.9 6.7 C11.9 8.6 9.3 8.7 9.2 10.9" fill="none" stroke="#3a3a3a" stroke-width="2.1" stroke-linecap="round"/><circle cx="9.2" cy="13.8" r="1.35" fill="#3a3a3a"/></svg>
<svg style="left:1981.9px;top:1230.3px;" width="17.8" height="18" viewBox="0 0 17.8 18"><g fill="#cccccc"><rect x="0" y="3.8" width="8.8" height="1.9"/><rect x="13.8" y="3.8" width="4" height="1.9"/><rect x="10.4" y="0.3" width="3.5" height="8.6" rx="1.7"/><rect x="0.2" y="12.4" width="3.2" height="1.9"/><rect x="8.8" y="12.4" width="9" height="1.9"/><rect x="5.2" y="9.4" width="3.6" height="8.4" rx="1.7"/></g></svg>
<svg style="left:2022.4px;top:1229.8px;" width="6" height="19" viewBox="0 0 6 19.0"><circle cx="3" cy="3.0" r="2.45" fill="#d2d2d2"/><circle cx="3" cy="9.5" r="2.45" fill="#d2d2d2"/><circle cx="3" cy="16.0" r="2.45" fill="#d2d2d2"/></svg>
<svg style="left:1247.7px;top:1226.6px;" width="21.6" height="24.8" viewBox="0 0 21.6 24.8"><path d="M1.6 0.3 H16 L21.3 5.4 V23.2 C21.3 24 20.8 24.5 20 24.5 H1.6 C0.8 24.5 0.3 24 0.3 23.2 V1.6 C0.3 0.8 0.8 0.3 1.6 0.3Z" fill="#efefee"/><g stroke="#1c6a27" stroke-width="2.1" fill="none"><path d="M9.8 5.8 L7.8 19.8 M14.8 5.8 L12.8 19.8 M4.8 10.4 H17.2 M4 15.4 H16.4"/></g></svg>
<div style="left:1210px;top:1276.2px;width:838px;height:2.4px;background:#161616;"></div>
<div style="left:1431.5px;top:1294.2px;width:395px;height:39px;background:#585858;border:1.3px solid #2c2c2c;border-bottom-color:#202020;border-radius:5px;"></div>
<svg style="left:2px;top:631px;" width="678.4" height="381.7" viewBox="0 0 678.4 381.7">
<defs>
<linearGradient id="sky" x1="0" y1="0" x2="0" y2="1">
<stop offset="0" stop-color="#47648f"/><stop offset="0.2" stop-color="#50709b"/><stop offset="0.39" stop-color="#6a88b0"/><stop offset="0.58" stop-color="#8ba5c4"/><stop offset="0.77" stop-color="#a9bdd0"/><stop offset="0.905" stop-color="#c6d4d7"/><stop offset="0.985" stop-color="#d2dad8"/><stop offset="1" stop-color="#c4ccca"/></linearGradient>
<linearGradient id="far" x1="0" y1="0" x2="0" y2="1"><stop offset="0" stop-color="#c8cecc"/><stop offset="0.3" stop-color="#cdcfcc"/><stop offset="1" stop-color="#d1d0cd"/></linearGradient>
<linearGradient id="pl" x1="0" y1="0" x2="0" y2="1"><stop offset="0" stop-color="#d9d9d9"/><stop offset="1" stop-color="#d3d2d0"/></linearGradient>
<radialGradient id="vig" cx="0.6" cy="0" r="0.75"><stop offset="0" stop-color="#2d4a7a" stop-opacity="0.22"/><stop offset="1" stop-color="#2d4a7a" stop-opacity="0"/></radialGradient>
<radialGradient id="lft" cx="0" cy="0.25" r="0.35"><stop offset="0" stop-color="#86a6cc" stop-opacity="0.3"/><stop offset="1" stop-color="#86a6cc" stop-opacity="0"/></radialGradient>
<linearGradient id="sp" x1="0" y1="0" x2="0" y2="1">
<stop offset="0" stop-color="#504c2b"/><stop offset="0.16" stop-color="#7a7140"/><stop offset="0.36" stop-color="#a8935a"/><stop offset="0.55" stop-color="#c9a95e"/><stop offset="0.74" stop-color="#d8b862"/><stop offset="0.85" stop-color="#ecd176"/><stop offset="0.93" stop-color="#d2ab52"/><stop offset="1" stop-color="#bf9a48"/></linearGradient>
<radialGradient id="spe" cx="0.5" cy="0.5" r="0.5"><stop offset="0.78" stop-color="#4a4020" stop-opacity="0"/><stop offset="1" stop-color="#4a4020" stop-opacity="0.3"/></radialGradient>
<filter id="bl" x="-30%" y="-30%" width="160%" height="160%"><feGaussianBlur stdDeviation="2.2"/></filter>
<filter id="b1" x="-10%" y="-10%" width="120%" height="120%"><feGaussianBlur stdDeviation="0.6"/></filter>
</defs>
<rect x="0" y="0" width="678.4" height="195.5" fill="url(#sky)"/>
<rect x="0" y="0" width="678.4" height="195.5" fill="url(#vig)"/>
<rect x="0" y="0" width="678.4" height="195.5" fill="url(#lft)"/>
<rect x="0" y="195" width="678.4" height="40" fill="url(#far)"/>
<rect x="0" y="234" width="678.4" height="147.7" fill="#d1d0cd"/>
<polygon points="0.0,274.3 172.3,231.4 506.3,231.6 678.4,273.9 678.4,381.7 0.0,381.7" fill="url(#pl)"/>
<polyline points="0.0,274.3 172.3,231.4 506.3,231.6 678.4,273.9" fill="none" stroke="#62656b" stroke-width="1.3"/>
<g filter="url(#bl)"><polygon points="278.0,263.0 288.0,257.0 312.0,254.0 318.0,265.0 308.0,274.0 282.0,272.0" fill="#9497a6"/></g>
<g filter="url(#b1)">
<polygon points="310.5,260.7 300.5,275.7 337.6,282.6 337.6,269.6" fill="#dedede"/>
<polygon points="366.8,259.5 377.5,275.7 340.6,282.6 340.6,269.6" fill="#e2e2e2"/>
<polyline points="300.5,276.3 337.4,283.2" stroke="#2a2a2a" stroke-width="1.9" fill="none"/>
<polyline points="340.8,283.2 377.5,276.3" stroke="#2a2a2a" stroke-width="1.9" fill="none"/>
<polygon points="311.6,259.0 339.0,248.6 366.4,258.6 343.0,270.4 339.0,266.0 335.0,270.4" fill="#303030"/>
<polygon points="326.7,256.6 339.0,251.2 351.3,256.2 339.0,262.0" fill="#dcdcdc"/>
<rect x="337.6" y="259" width="3" height="23.6" fill="#dadada"/>
<circle cx="339.3" cy="208.20000000000005" r="41" fill="url(#sp)"/>
<circle cx="339.3" cy="208.20000000000005" r="41" fill="url(#spe)"/>
<ellipse cx="339.3" cy="241" rx="17" ry="4" fill="#f2dc86" opacity="0.55"/>
<rect x="338" y="221" width="2.7" height="29" fill="#242424"/>
<ellipse cx="339.3" cy="197.20000000000005" rx="26.2" ry="24.6" fill="#e3e3e3" stroke="#1d1d1d" stroke-width="2.3"/>
<g transform="translate(339.3,198.20000000000005)">
<polygon points="0,-17 15,-9.4 15,8.2 0,16.8 -15,8.2 -15,-9.4" fill="#2f2f2f"/>
<polygon points="0,-11.5 6.4,-8.2 0,-4.6 -6.4,-8.2" fill="#dadada"/>
<polygon points="-10.4,-3.4 -3,0.6 -3,8.6 -10.4,4.4" fill="#b4b4b4"/>
<polygon points="10.4,-3.4 3,0.6 3,8.6 10.4,4.4" fill="#e6e6e6"/>
<rect x="-1.1" y="-17" width="2.2" height="9" fill="#e3e3e3"/>
<polygon points="-15,8.2 -10.6,5.6 -9.6,7.2 -14,9.8" fill="#e3e3e3"/>
<polygon points="15,8.2 10.6,5.6 9.6,7.2 14,9.8" fill="#e3e3e3"/>
</g>
</g>
<rect x="677.1999999999999" y="0" width="1.2" height="381.7" fill="#f2f2f2" opacity="0.9"/>
<rect x="0" y="380.5" width="678.4" height="1.2" fill="#f2f2f2" opacity="0.9"/>
</svg>
<div style="left:2px;top:629.4px;width:678.4px;height:1.6px;background:#1e1e1e;"></div>
<div style="left:2px;top:1012.7px;width:678.4px;height:1.3px;background:#111;"></div>
<div style="left:2045.8px;top:0px;width:2.2px;height:1343px;background:rgba(255,255,255,0.2);"></div>
<div id="t">
<span style="left:47.0px;top:7.0px;letter-spacing:-0.90px;color:#d0d0d0;">Game</span>
<span style="left:8.5px;top:44.0px;letter-spacing:-0.90px;color:#d0d0d0;">Game</span>
<span style="left:174.9px;top:44.0px;letter-spacing:-0.64px;color:#d0d0d0;">Display 1</span>
<span style="left:313.3px;top:44.0px;letter-spacing:-0.09px;color:#d0d0d0;">1920x1080 Landscape</span>
<span style="left:595.0px;top:45.0px;letter-spacing:-0.32px;color:#d0d0d0;">Scale</span>
<span style="left:728.8px;top:7.0px;letter-spacing:-0.12px;color:#d0d0d0;">Hierarchy</span>
<span style="left:791.8px;top:44.0px;letter-spacing:-0.90px;color:#737373;">All</span>
<span style="left:795.9px;top:76.0px;letter-spacing:1.08px;color:#e2e2e2;-webkit-text-stroke:0.75px #e2e2e2;font-size:22.5px;">FMWebSocketSender*</span>
<span style="left:818.9px;top:103.0px;letter-spacing:0.06px;color:#d0d0d0;">Lights</span>
<span style="left:818.9px;top:131.0px;letter-spacing:-0.10px;color:#d0d0d0;">Geometry</span>
<span style="left:818.9px;top:159.0px;letter-spacing:-0.41px;color:#d0d0d0;">Main Camera</span>
<span style="left:818.9px;top:214.0px;letter-spacing:-0.24px;color:#d0d0d0;">Global Volume</span>
<span style="left:818.9px;top:242.0px;letter-spacing:-0.13px;color:#d0d0d0;">FMWebSocketManager</span>
<span style="left:818.9px;top:269.0px;letter-spacing:-0.27px;color:#d0d0d0;">GameViewEncoder</span>
<span style="left:843.0px;top:186.0px;letter-spacing:-0.37px;color:#d0d0d0;">RenderCam</span>
<span style="left:1254.2px;top:7.0px;letter-spacing:0.39px;color:#d0d0d0;">Inspector</span>
<span style="left:1442.8px;top:7.0px;letter-spacing:0.09px;color:#d0d0d0;">Project Settings</span>
<span style="left:1664.3px;top:7.0px;letter-spacing:0.03px;color:#d0d0d0;">Build Settings</span>
<span style="left:1330.7px;top:59.0px;letter-spacing:0.82px;color:#e6e6e6;-webkit-text-stroke:0.75px #e6e6e6;font-size:22.5px;">RenderCam</span>
<span style="left:1945.5px;top:58.0px;letter-spacing:0.36px;color:#c4c4c4;">Static</span>
<span style="left:1280.8px;top:99.0px;letter-spacing:-0.22px;color:#c4c4c4;">Tag</span>
<span style="left:1332.5px;top:99.0px;letter-spacing:0.26px;color:#e0e0e0;">Untagged</span>
<span style="left:1672.0px;top:99.0px;letter-spacing:-0.18px;color:#c4c4c4;">Layer</span>
<span style="left:1746.0px;top:99.0px;letter-spacing:0.00px;color:#e0e0e0;">Default</span>
<span style="left:1314.3px;top:148.0px;letter-spacing:1.26px;color:#dcdcdc;-webkit-text-stroke:0.75px #dcdcdc;font-size:22.5px;">Transform</span>
<span style="left:1242.9px;top:190.0px;letter-spacing:0.07px;color:#c4c4c4;">Position</span>
<span style="left:1554.6px;top:190.0px;letter-spacing:0.45px;color:#c4c4c4;">X</span>
<span style="left:1585.8px;top:190.0px;letter-spacing:0.45px;color:#dedede;">0</span>
<span style="left:1720.7px;top:190.0px;letter-spacing:0.45px;color:#c4c4c4;">Y</span>
<span style="left:1750.1px;top:190.0px;letter-spacing:0.45px;color:#dedede;">0</span>
<span style="left:1885.0px;top:190.0px;letter-spacing:0.45px;color:#c4c4c4;">Z</span>
<span style="left:1915.6px;top:190.0px;letter-spacing:0.45px;color:#dedede;">0</span>
<span style="left:1242.9px;top:224.0px;letter-spacing:0.06px;color:#c4c4c4;">Rotation</span>
<span style="left:1554.6px;top:224.0px;letter-spacing:0.45px;color:#c4c4c4;">X</span>
<span style="left:1585.8px;top:225.0px;letter-spacing:0.45px;color:#dedede;">0</span>
<span style="left:1720.7px;top:224.0px;letter-spacing:0.45px;color:#c4c4c4;">Y</span>
<span style="left:1750.1px;top:225.0px;letter-spacing:0.45px;color:#dedede;">0</span>
<span style="left:1885.0px;top:224.0px;letter-spacing:0.45px;color:#c4c4c4;">Z</span>
<span style="left:1915.6px;top:225.0px;letter-spacing:0.45px;color:#dedede;">0</span>
<span style="left:1242.9px;top:259.0px;letter-spacing:-0.42px;color:#c4c4c4;">Scale</span>
<span style="left:1554.6px;top:259.0px;letter-spacing:0.45px;color:#c4c4c4;">X</span>
<span style="left:1584.6px;top:259.0px;letter-spacing:0.45px;color:#dedede;">1</span>
<span style="left:1720.7px;top:259.0px;letter-spacing:0.45px;color:#c4c4c4;">Y</span>
<span style="left:1748.9px;top:259.0px;letter-spacing:0.45px;color:#dedede;">1</span>
<span style="left:1885.0px;top:259.0px;letter-spacing:0.45px;color:#c4c4c4;">Z</span>
<span style="left:1914.4px;top:259.0px;letter-spacing:0.45px;color:#dedede;">1</span>
<span style="left:1313.3px;top:309.0px;letter-spacing:0.78px;color:#dcdcdc;-webkit-text-stroke:0.75px #dcdcdc;font-size:22.5px;">Camera</span>
<span style="left:1248.0px;top:351.0px;letter-spacing:-0.17px;color:#c4c4c4;">Render Type</span>
<span style="left:1565.0px;top:350.0px;letter-spacing:-0.70px;color:#e0e0e0;">Base</span>
<span style="left:1266.5px;top:397.0px;letter-spacing:1.40px;color:#dcdcdc;-webkit-text-stroke:0.75px #dcdcdc;font-size:22.5px;">Projection</span>
<span style="left:1274.0px;top:430.0px;letter-spacing:0.16px;color:#c4c4c4;">Projection</span>
<span style="left:1565.0px;top:429.0px;letter-spacing:0.06px;color:#e0e0e0;">Perspective</span>
<span style="left:1300.3px;top:465.0px;letter-spacing:-0.03px;color:#c4c4c4;">Field of View Axis</span>
<span style="left:1566.0px;top:464.0px;letter-spacing:0.32px;color:#e0e0e0;">Vertical</span>
<span style="left:1300.3px;top:499.0px;letter-spacing:-0.01px;color:#c4c4c4;">Field of View</span>
<span style="left:1954.5px;top:500.0px;letter-spacing:0.96px;color:#dedede;">60</span>
<span style="left:1300.3px;top:534.0px;letter-spacing:-0.20px;color:#c4c4c4;">Clipping Planes</span>
<span style="left:1556.7px;top:534.0px;letter-spacing:-0.42px;color:#c4c4c4;">Near</span>
<span style="left:1624.0px;top:534.0px;letter-spacing:-0.87px;color:#dedede;">0.3</span>
<span style="left:1556.7px;top:569.0px;letter-spacing:-0.90px;color:#c4c4c4;">Far</span>
<span style="left:1623.0px;top:569.0px;letter-spacing:-0.24px;color:#dedede;">1000</span>
<span style="left:1300.3px;top:603.0px;letter-spacing:-0.36px;color:#c4c4c4;">Physical Camera</span>
<span style="left:1266.5px;top:650.0px;letter-spacing:1.10px;color:#dcdcdc;-webkit-text-stroke:0.75px #dcdcdc;font-size:22.5px;">Rendering</span>
<span style="left:1274.0px;top:683.0px;letter-spacing:-0.31px;color:#c4c4c4;">Renderer</span>
<span style="left:1565.0px;top:682.0px;letter-spacing:-0.17px;color:#e0e0e0;">Default Renderer (Mobile_Renderer)</span>
<span style="left:1274.0px;top:717.0px;letter-spacing:-0.02px;color:#c4c4c4;">Post Processing</span>
<span style="left:1275.0px;top:752.0px;letter-spacing:0.17px;color:#c4c4c4;">Anti-aliasing</span>
<span style="left:1565.0px;top:751.0px;letter-spacing:-0.05px;color:#e0e0e0;">Fast Approximate Anti-aliasing (FXAA)</span>
<span style="left:1274.0px;top:790.0px;letter-spacing:-0.22px;color:#c4c4c4;">Stop NaNs</span>
<span style="left:1274.0px;top:825.0px;letter-spacing:0.30px;color:#c4c4c4;">Dithering</span>
<span style="left:1274.0px;top:859.0px;letter-spacing:-0.27px;color:#c4c4c4;">Render Shadows</span>
<span style="left:1274.0px;top:894.0px;letter-spacing:0.14px;color:#c4c4c4;">Priority</span>
<span style="left:1564.8px;top:894.0px;letter-spacing:0.87px;color:#dedede;">-3</span>
<span style="left:1274.0px;top:929.0px;letter-spacing:0.01px;color:#c4c4c4;">Opaque Texture</span>
<span style="left:1565.0px;top:927.0px;letter-spacing:-0.03px;color:#e0e0e0;">Use settings from Render Pipeline Asset</span>
<span style="left:1274.0px;top:963.0px;letter-spacing:0.19px;color:#c4c4c4;">Depth Texture</span>
<span style="left:1565.0px;top:962.0px;letter-spacing:-0.03px;color:#e0e0e0;">Use settings from Render Pipeline Asset</span>
<span style="left:1274.0px;top:998.0px;letter-spacing:-0.20px;color:#c4c4c4;">Culling Mask</span>
<span style="left:1565.0px;top:997.0px;letter-spacing:0.25px;color:#e0e0e0;">Everything</span>
<span style="left:1274.0px;top:1032.0px;letter-spacing:-0.02px;color:#c4c4c4;">Occlusion Culling</span>
<span style="left:1266.5px;top:1078.0px;letter-spacing:1.27px;color:#dcdcdc;-webkit-text-stroke:0.75px #dcdcdc;font-size:22.5px;">Stack</span>
<span style="left:1266.5px;top:1109.0px;letter-spacing:1.03px;color:#dcdcdc;-webkit-text-stroke:0.75px #dcdcdc;font-size:22.5px;">Environment</span>
<span style="left:1266.5px;top:1141.0px;letter-spacing:1.50px;color:#dcdcdc;-webkit-text-stroke:0.75px #dcdcdc;font-size:22.5px;">Output</span>
<span style="left:1314.3px;top:1187.0px;letter-spacing:1.20px;color:#dcdcdc;-webkit-text-stroke:0.75px #dcdcdc;font-size:22.5px;">Audio Listener</span>
<span style="left:1313.3px;top:1228.0px;letter-spacing:1.23px;color:#dcdcdc;-webkit-text-stroke:0.75px #dcdcdc;font-size:22.5px;">Universal Additional Camera Data (Script)</span>
<span style="left:1549.5px;top:1302.0px;letter-spacing:0.00px;color:#e4e4e4;">Add Component</span>
</div>
</body></html>
